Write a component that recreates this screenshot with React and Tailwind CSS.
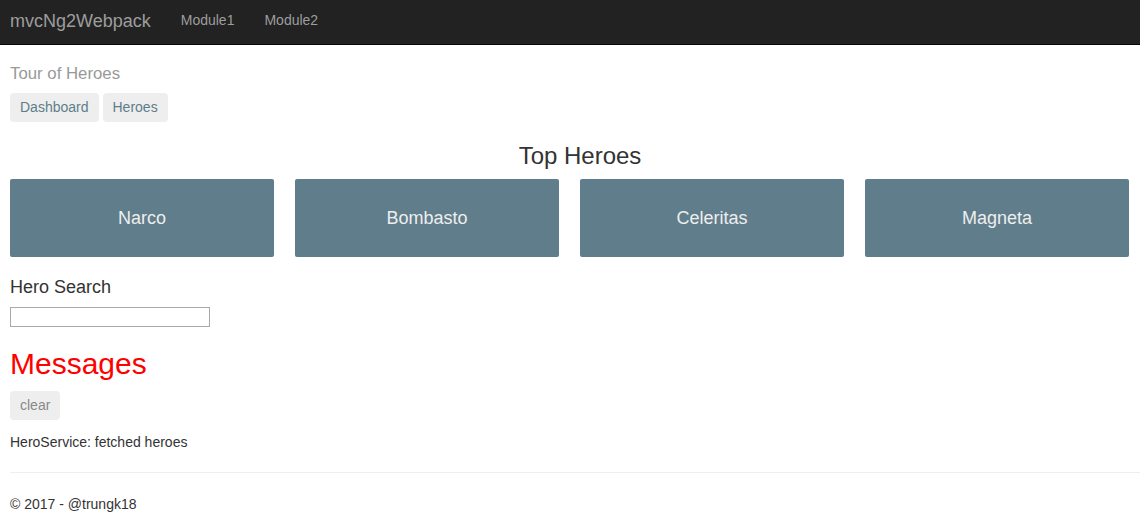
import React from 'react';

const heroes = ['Narco', 'Bombasto', 'Celeritas', 'Magneta'];

const App = () => {
  return (
    <div className="min-h-screen bg-white text-[#333] font-['Liberation_Sans',Arial,sans-serif] text-[14px]">
      <nav className="h-[45px] bg-[#222] border-b border-[#080808] flex items-center px-[10px] pb-[3px]">
        <span className="text-[18px] text-[#9d9d9d] leading-none">mvcNg2Webpack</span>
        <span className="ml-[30px] text-[14px] text-[#9d9d9d]">Module1</span>
        <span className="ml-[30px] text-[14px] text-[#9d9d9d]">Module2</span>
      </nav>

      <div className="px-[10px]">
        <h1 className="mt-[19px] text-[16.8px] leading-[20px] text-[#999]">Tour of Heroes</h1>
        <div className="mt-[9px] flex gap-[4px]">
          <a className="h-[29px] flex items-center px-[10px] bg-[#eee] rounded-[4px] text-[#607d8b]">Dashboard</a>
          <a className="h-[29px] flex items-center px-[10px] bg-[#eee] rounded-[4px] text-[#607d8b]">Heroes</a>
        </div>

        <h3 className="mt-[20px] pl-[20px] text-center text-[24px] leading-[28px] text-[#333]">Top Heroes</h3>
        <div className="mt-[9px] grid grid-cols-[repeat(4,264px)] gap-[21px]">
          {heroes.map((name) => (
            <div
              key={name}
              className="h-[78px] bg-[#607d8b] rounded-[2px] flex items-center justify-center text-[18px] text-[#eee]"
            >
              {name}
            </div>
          ))}
        </div>

        <h4 className="mt-[19px] text-[18px] leading-[22px] text-[#333]">Hero Search</h4>
        <input className="mt-[9px] block w-[200px] h-[20px] border border-[#a9a9a9] outline-none" />

        <h2 className="mt-[20px] text-[30px] leading-[34px] text-[#ff0000]">Messages</h2>
        <button className="mt-[10px] h-[29px] flex items-center px-[10px] bg-[#eee] rounded-[4px] text-[#888]">
          clear
        </button>
        <div className="mt-[12px] leading-[20px]">HeroService: fetched heroes</div>

        <hr className="mt-[20px] -mr-[10px] border-t border-[#eee]" />
        <footer className="mt-[21px] leading-[20px]">© 2017 - @trungk18</footer>
      </div>
    </div>
  );
};

export default App;
